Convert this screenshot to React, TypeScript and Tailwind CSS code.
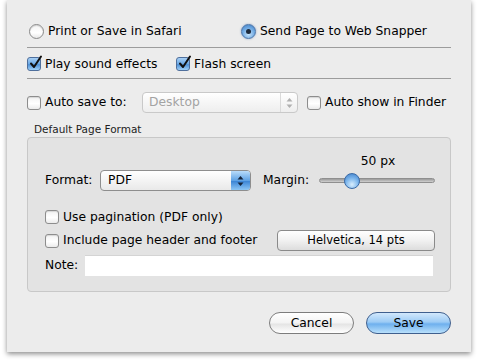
import React from 'react'

const font = { fontFamily: '"DejaVu Sans", "Lucida Grande", sans-serif' }

function Radio({ on }: { on?: boolean }) {
  return on ? (
    <span className="relative inline-flex h-[15px] w-[15px] shrink-0 items-center justify-center rounded-full border border-[#4a74a8] bg-[radial-gradient(circle_at_50%_70%,#c8e4fb_0%,#6fa9e2_55%,#3f7fc7_100%)] shadow-[0_0_2px_rgba(40,90,170,0.5)]">
      <span className="h-[5px] w-[5px] rounded-full bg-[#1d2a3c]" />
    </span>
  ) : (
    <span className="inline-block h-[15px] w-[15px] shrink-0 rounded-full border border-[#8a8a8a] bg-[linear-gradient(#f4f4f4,#ffffff_60%,#e8e8e8)] shadow-[inset_0_1px_1px_rgba(0,0,0,0.15)]" />
  )
}

function Check({ on }: { on?: boolean }) {
  if (!on)
    return (
      <span className="inline-block h-[14px] w-[14px] shrink-0 rounded-[3px] border border-[#8d8d8d] bg-[linear-gradient(#f2f2f2,#ffffff_55%,#ebebeb)] shadow-[inset_0_1px_1px_rgba(0,0,0,0.12)]" />
    )
  return (
    <span className="relative inline-block h-[14px] w-[14px] shrink-0 rounded-[3px] border border-[#4f6f9c] bg-[linear-gradient(#a9d0f5,#6aa7e3_50%,#4f91d6_55%,#9fd0f7)]">
      <svg className="absolute left-[1px] top-[-3px]" width="14" height="15" viewBox="0 0 14 15">
        <path d="M2 8.5 L5 12 L12 1.5" fill="none" stroke="#111" strokeWidth="2" strokeLinecap="round" strokeLinejoin="round" />
      </svg>
    </span>
  )
}

function Stepper({ color }: { color: string }) {
  return (
    <svg width="7" height="12" viewBox="0 0 7 12">
      <path d="M3.5 1 L6.5 4.5 L0.5 4.5 Z" fill={color} />
      <path d="M3.5 11 L6.5 7.5 L0.5 7.5 Z" fill={color} />
    </svg>
  )
}

export default function App() {
  return (
    <div className="h-[363px] w-[478px] whitespace-nowrap bg-white text-[12.3px] text-black" style={font}>
      <div className="ml-[7px] flex h-[352px] w-[464px] flex-col bg-[#ececec] px-[20px] shadow-[0_2px_5px_rgba(0,0,0,0.45)]">
        {/* Output choice */}
        <div className="mt-[23px] flex h-[16px] items-center">
          <div className="ml-[2px] flex w-[212px] shrink-0 items-center gap-[4px]">
            <Radio />
            <span>Print or Save in Safari</span>
          </div>
          <div className="flex items-center gap-[4px]">
            <Radio on />
            <span>Send Page to Web Snapper</span>
          </div>
        </div>
        <div className="mt-[8px] h-px bg-[#9c9c9c]" />

        {/* Effects */}
        <div className="mt-[8px] flex h-[16px] items-center">
          <div className="flex w-[149px] shrink-0 items-center gap-[4px]">
            <Check on />
            <span>Play sound effects</span>
          </div>
          <div className="flex items-center gap-[4px]">
            <Check on />
            <span>Flash screen</span>
          </div>
        </div>
        <div className="mt-[6px] h-px bg-[#9c9c9c]" />

        {/* Auto save */}
        <div className="mt-[13px] flex h-[21px] items-center">
          <div className="flex w-[115px] shrink-0 items-center gap-[4px]">
            <Check />
            <span>Auto save to:</span>
          </div>
          <div className="flex h-[21px] w-[156px] shrink-0 items-center rounded-[4px] border border-[#c9c9c9] bg-[linear-gradient(#ffffff,#f6f6f6_50%,#eeeeee)]">
            <span className="flex-1 pl-[6px] text-[#a3a3a3]">Desktop</span>
            <span className="flex h-full w-[17px] items-center justify-center border-l border-[#dadada]">
              <Stepper color="#b0b0b0" />
            </span>
          </div>
          <div className="ml-[9px] flex items-center gap-[4px]">
            <Check />
            <span>Auto show in Finder</span>
          </div>
        </div>

        {/* Default Page Format */}
        <div className="ml-[7px] mt-[9px] text-[10.5px] leading-[14px] text-[#222]">Default Page Format</div>
        <div className="mt-[1px] flex h-[155px] flex-col rounded-[4px] border border-[#c8c8c8] bg-[#e3e3e3] px-[17px]">
          <div className="ml-[298px] mt-[15px] h-[16px] w-[70px] text-center leading-[16px]">50 px</div>
          <div className="mt-[1px] flex h-[21px] items-center">
            <span className="w-[55px] shrink-0">Format:</span>
            <div className="flex h-[21px] w-[151px] shrink-0 items-center overflow-hidden rounded-[4px] border border-[#8e8e8e] bg-[linear-gradient(#ffffff,#f4f4f4_50%,#e9e9e9)]">
              <span className="flex-1 pl-[7px]">PDF</span>
              <span className="flex h-full w-[19px] items-center justify-center bg-[linear-gradient(#b9dcfa,#5fa2e4_50%,#3d86d6_55%,#8cc6f5)]">
                <Stepper color="#15243a" />
              </span>
            </div>
            <span className="ml-[12px] w-[56px] shrink-0">Margin:</span>
            <div className="relative flex h-[16px] w-[116px] shrink-0 items-center">
              <div className="h-[5px] w-full rounded-full border border-[#8f8f8f] bg-[linear-gradient(#9a9a9a,#d0d0d0)]" />
              <span className="absolute left-[25px] top-0 h-[16px] w-[16px] rounded-full border border-[#3a6aa6] bg-[radial-gradient(circle_at_50%_75%,#d8eefe_0%,#7db6ec_50%,#3a7cc8_100%)]" />
            </div>
          </div>

          <div className="mt-[18px] flex h-[16px] items-center gap-[4px]">
            <Check />
            <span>Use pagination (PDF only)</span>
          </div>
          <div className="mt-[5px] flex h-[21px] items-center">
            <div className="flex w-[232px] shrink-0 items-center gap-[4px]">
              <Check />
              <span>Include page header and footer</span>
            </div>
            <button className="flex h-[21px] w-[158px] shrink-0 items-center justify-center rounded-[4px] border border-[#8a8a8a] bg-[linear-gradient(#ffffff,#f1f1f1_50%,#dddddd)] text-[11.5px]">
              Helvetica, 14 pts
            </button>
          </div>
          <div className="mt-[4px] flex h-[21px] items-center">
            <span className="w-[40px] shrink-0">Note:</span>
            <div className="h-[21px] w-[350px] border-t border-[#d4d4d4] bg-white" />
          </div>
        </div>

        {/* Buttons */}
        <div className="mt-[20px] flex justify-end gap-[12px]">
          <button className="flex h-[22px] w-[85px] items-center justify-center rounded-full border border-[#7d7d7d] bg-[linear-gradient(#ffffff,#f3f3f3_50%,#e4e4e4_55%,#ffffff)]">
            Cancel
          </button>
          <button className="flex h-[22px] w-[85px] items-center justify-center rounded-full border border-[#3f5f8e] bg-[linear-gradient(#d2e8fc,#9ccbf5_45%,#6eb0ee_55%,#b9e0fb)]">
            Save
          </button>
        </div>
      </div>
    </div>
  )
}
